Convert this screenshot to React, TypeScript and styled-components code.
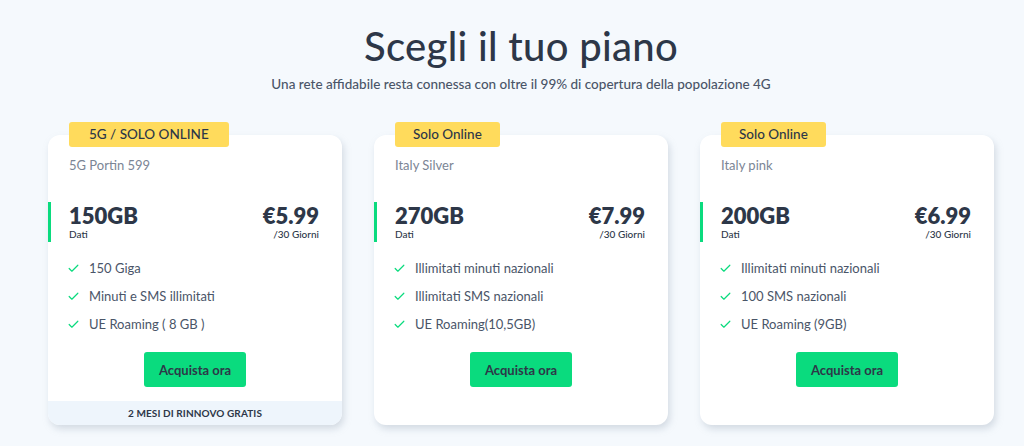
import React from "react";
import styled, { createGlobalStyle } from "styled-components";
import { Check } from "lucide-react";

const Global = createGlobalStyle`
  html, body { margin: 0; padding: 0; background: #F5F9FD; }
  body { font-family: Lato, "Open Sans", sans-serif; color: #2D3748; }
  * { box-sizing: border-box; }
`;

const Page = styled.main`
  width: 1024px;
  height: 446px;
  padding: 0 0 0 18px;
  display: flex;
  flex-direction: column;
  align-items: center;
  overflow: hidden;
`;

const Title = styled.h1`
  margin: 22px 0 0;
  font-size: 40px;
  line-height: 48px;
  font-weight: 500;
  color: #2D3748;
  letter-spacing: 0.3px;
`;

const Subtitle = styled.p`
  margin: 5px 0 0;
  font-size: 13.5px;
  line-height: 18px;
  font-weight: 500;
  color: #4A5568;
`;

const Grid = styled.div`
  margin-top: 42px;
  display: grid;
  grid-template-columns: repeat(3, 294px);
  column-gap: 32px;
  align-items: stretch;
`;

const Card = styled.section`
  position: relative;
  background: #fff;
  border-radius: 12px;
  box-shadow: 2px 4px 7px rgba(150, 162, 180, 0.35);
  display: flex;
  flex-direction: column;
  padding: 22px 0 0;
`;

const Badge = styled.div<{ $wide?: boolean }>`
  position: absolute;
  top: -13px;
  left: 21px;
  height: 25px;
  padding: 0 ${(p) => (p.$wide ? "20px" : "18px")};
  background: #FFDB5C;
  border-radius: 3px;
  font-size: 13.5px;
  line-height: 25px;
  font-weight: 500;
  color: #2D3748;
  white-space: nowrap;
`;

const PlanName = styled.div`
  padding: 0 21px;
  font-size: 13px;
  line-height: 16px;
  color: #7B8595;
`;

const DataRow = styled.div`
  margin-top: 29px;
  height: 40px;
  border-left: 3px solid #0ADB7E;
  padding: 2px 23px 0 18px;
  display: flex;
  justify-content: space-between;
`;

const Stat = styled.div<{ $right?: boolean }>`
  display: flex;
  flex-direction: column;
  align-items: ${(p) => (p.$right ? "flex-end" : "flex-start")};
`;

const Big = styled.div`
  font-size: 22px;
  line-height: 24px;
  font-weight: 800;
  color: #2D3748;
`;

const Small = styled.div`
  font-size: 10px;
  line-height: 12px;
  font-weight: 500;
  color: #2D3748;
`;

const Features = styled.ul`
  list-style: none;
  margin: 12px 0 0;
  padding: 0 21px 0 19px;
`;

const Feature = styled.li`
  height: 28px;
  display: flex;
  align-items: center;
  gap: 9px;
  font-size: 13px;
  color: #4A5568;
  svg { flex: none; }
`;

const Button = styled.button`
  align-self: center;
  margin-top: 14px;
  width: 102px;
  height: 35px;
  border: none;
  border-radius: 3px;
  background: #0ADB7E;
  color: #2D3748;
  font-family: inherit;
  font-size: 13px;
  font-weight: 700;
  cursor: pointer;
`;

const Footer = styled.div`
  margin-top: auto;
  height: 24px;
  background: #EEF5FC;
  border-radius: 0 0 12px 12px;
  display: flex;
  align-items: center;
  justify-content: center;
  font-size: 10px;
  font-weight: 700;
  color: #2D3748;
  letter-spacing: 0.1px;
`;

const Spacer = styled.div`
  height: 38px;
  margin-top: auto;
`;

type Plan = {
  badge: string;
  name: string;
  gb: string;
  price: string;
  features: string[];
  footer?: string;
};

const plans: Plan[] = [
  {
    badge: "5G / SOLO ONLINE",
    name: "5G Portin 599",
    gb: "150GB",
    price: "€5.99",
    features: ["150 Giga", "Minuti e SMS illimitati", "UE Roaming ( 8 GB )"],
    footer: "2 MESI DI RINNOVO GRATIS",
  },
  {
    badge: "Solo Online",
    name: "Italy Silver",
    gb: "270GB",
    price: "€7.99",
    features: ["Illimitati minuti nazionali", "Illimitati SMS nazionali", "UE Roaming(10,5GB)"],
  },
  {
    badge: "Solo Online",
    name: "Italy pink",
    gb: "200GB",
    price: "€6.99",
    features: ["Illimitati minuti nazionali", "100 SMS nazionali", "UE Roaming (9GB)"],
  },
];

export default function App() {
  return (
    <>
      <Global />
      <Page>
        <Title>Scegli il tuo piano</Title>
        <Subtitle>Una rete affidabile resta connessa con oltre il 99% di copertura della popolazione 4G</Subtitle>
        <Grid>
          {plans.map((p, i) => (
            <Card key={i}>
              <Badge $wide={i === 0}>{p.badge}</Badge>
              <PlanName>{p.name}</PlanName>
              <DataRow>
                <Stat>
                  <Big>{p.gb}</Big>
                  <Small>Dati</Small>
                </Stat>
                <Stat $right>
                  <Big>{p.price}</Big>
                  <Small>/30 Giorni</Small>
                </Stat>
              </DataRow>
              <Features>
                {p.features.map((f) => (
                  <Feature key={f}>
                    <Check size={13} strokeWidth={2.2} color="#0ADB7E" />
                    {f}
                  </Feature>
                ))}
              </Features>
              <Button>Acquista ora</Button>
              {p.footer ? <Footer>{p.footer}</Footer> : <Spacer />}
            </Card>
          ))}
        </Grid>
      </Page>
    </>
  );
}
